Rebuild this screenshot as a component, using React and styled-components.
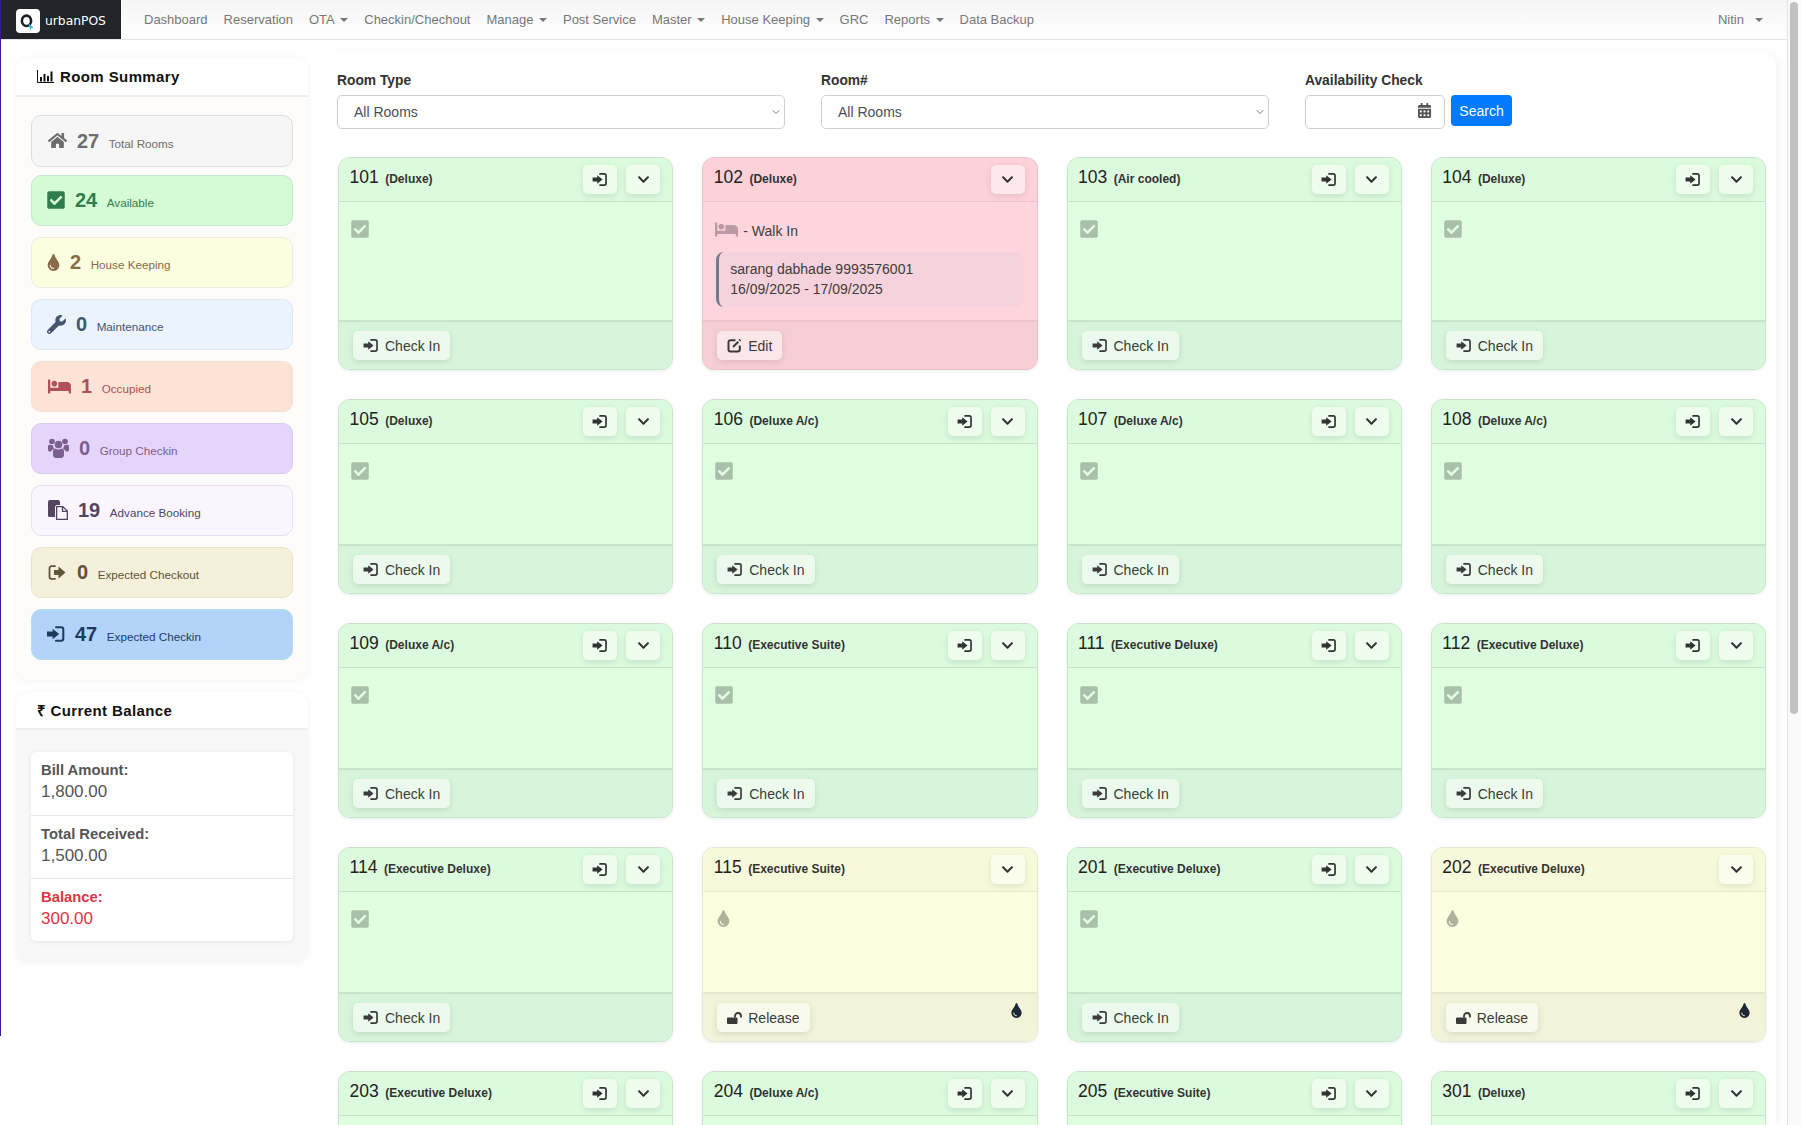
import React from 'react';
import styled, { createGlobalStyle } from 'styled-components';
import {
  FaHome,
  FaCheckSquare,
  FaTint,
  FaWrench,
  FaBed,
  FaChevronDown,
  FaCalendarAlt,
} from 'react-icons/fa';
import { FiChevronDown } from 'react-icons/fi';

const GlobalStyle = createGlobalStyle`
  html, body {
    margin: 0;
    height: 100%;
    overflow: hidden;
    background: #fff;
  }
  * { box-sizing: border-box; }
  body {
    font-family: "Liberation Sans", Arial, sans-serif;
    font-size: 14px;
    color: #333;
  }
`;

const links = [
  { label: 'Dashboard' },
  { label: 'Reservation' },
  { label: 'OTA', menu: true },
  { label: 'Checkin/Chechout' },
  { label: 'Manage', menu: true },
  { label: 'Post Service' },
  { label: 'Master', menu: true },
  { label: 'House Keeping', menu: true },
  { label: 'GRC' },
  { label: 'Reports', menu: true },
  { label: 'Data Backup' },
];

const stats = [
  { key: 'total', w: 18, icon: <FaHome size={19} />, count: 27, label: 'Total Rooms', bg: '#f6f6f6', line: '#dddddd', fg: '#6d6d6d' },
  { key: 'available', w: 16, icon: <FaCheckSquare size={20} />, count: 24, label: 'Available', bg: '#d5fbd5', line: '#c3e8cf', fg: '#2f7d4f' },
  { key: 'hk', w: 11, icon: <FaTint size={17} />, count: 2, label: 'House Keeping', bg: '#fbffdf', line: '#ecedde', fg: '#8a6a4d' },
  { key: 'maint', w: 17, icon: <FaWrench size={19} />, count: 0, label: 'Maintenance', bg: '#ebf3fc', line: '#e1e6ef', fg: '#45566b' },
  { key: 'occupied', w: 22, icon: <FaBed size={23} />, count: 1, label: 'Occupied', bg: '#fde3d6', line: '#f6e0d5', fg: '#b0505a' },
  { key: 'group', w: 20, icon: <UsersIcon />, count: 0, label: 'Group Checkin', bg: '#e6d5fb', line: '#dacbf1', fg: '#7b5f8f' },
  { key: 'advance', w: 19, icon: <FilesIcon />, count: 19, label: 'Advance Booking', bg: '#faf5ff', line: '#e6e0f1', fg: '#55465f' },
  { key: 'out', w: 18, icon: <SignOutIcon />, count: 0, label: 'Expected Checkout', bg: '#f5f0d9', line: '#e9e3c9', fg: '#5d5538' },
  { key: 'in', w: 16, icon: <SignInIcon width={18} height={16} />, count: 47, label: 'Expected Checkin', bg: '#b2d4fb', line: '#b7dde0', fg: '#1f3a5c' },
];

const rooms = [
  ['101', 'Deluxe'],
  ['102', 'Deluxe', 'occupied'],
  ['103', 'Air cooled'],
  ['104', 'Deluxe'],
  ['105', 'Deluxe'],
  ['106', 'Deluxe A/c'],
  ['107', 'Deluxe A/c'],
  ['108', 'Deluxe A/c'],
  ['109', 'Deluxe A/c'],
  ['110', 'Executive Suite'],
  ['111', 'Executive Deluxe'],
  ['112', 'Executive Deluxe'],
  ['114', 'Executive Deluxe'],
  ['115', 'Executive Suite', 'cleaning'],
  ['201', 'Executive Deluxe'],
  ['202', 'Executive Deluxe', 'cleaning'],
  ['203', 'Executive Deluxe'],
  ['204', 'Deluxe A/c'],
  ['205', 'Executive Suite'],
  ['301', 'Deluxe'],
];

const tones = {
  free: { head: '#dcfadd', body: '#e0fee0', foot: '#d7f5da', line: '#c6e6ca', hint: '#a9bfa9' },
  occupied: { head: '#fdd1d8', body: '#ffd5dd', foot: '#f6ced4', line: '#edc2ca', hint: '#bb9aa5' },
  cleaning: { head: '#f6fadb', body: '#fbffdf', foot: '#f1f4d8', line: '#e6e9d0', hint: '#adb39d' },
};

function SignInIcon({ width = 16, height = 13 }) {
  return (
    <svg width={width} height={height} viewBox="0 0 16 14">
      <path d="M0 4.800h5V2.400l5.800 4.600L5 11.600V9.200H0z" fill="currentColor" />
      <path d="M8 1h4.500a2 2 0 0 1 2 2v8a2 2 0 0 1-2 2H8" fill="none" stroke="currentColor" strokeWidth="1.800" strokeLinecap="round" />
    </svg>
  );
}

function SignOutIcon() {
  return (
    <svg width="18" height="15" viewBox="0 0 18 15">
      <path d="M7 1.200H3.500a2 2 0 0 0-2 2v8.600a2 2 0 0 0 2 2H7" fill="none" stroke="currentColor" strokeWidth="1.800" strokeLinecap="round" />
      <path d="M6 5h4.500V1.500l7 6-7 6V10H6z" fill="currentColor" />
    </svg>
  );
}

function UsersIcon() {
  return (
    <svg width="21" height="20" viewBox="0 0 21 20" fill="currentColor">
      <circle cx="4" cy="3.500" r="2.800" />
      <circle cx="17" cy="3.500" r="2.800" />
      <circle cx="10.500" cy="6.500" r="3.800" />
      <path d="M5 13.500c0-2 1.500-3 2.500-3 .8.600 1.800 1 3 1s2.200-.4 3-1c1 0 2.500 1 2.500 3V17c0 1.500-1 3-3 3H8c-2 0-3-1.500-3-3z" />
      <path d="M0 8.500c0-1 .8-2 1.800-2 .6.500 1.400.8 2.200.8.500 0 .8 0 1.200-.2-.2.600-.2 1-.1 1.500.2 1 .6 1.700 1 2.300-1.500.3-2.600 1.300-3 2.600H1.500C.5 13.500 0 12.500 0 11.500z" />
      <path d="M21 8.500c0-1-.8-2-1.800-2-.6.500-1.400.8-2.200.8-.5 0-.8 0-1.200-.2.200.600.200 1 .1 1.500-.2 1-.6 1.700-1 2.300 1.500.3 2.600 1.300 3 2.600h1.600c1 0 1.500-1 1.500-2z" />
    </svg>
  );
}

function FilesIcon() {
  return (
    <svg width="20" height="20" viewBox="0 0 20 20">
      <path d="M2 0h8.500l1.500 1.500V5H8.500L7 6.500V17H1.500A1.500 1.500 0 0 1 0 15.500V2a2 2 0 0 1 2-2z" fill="currentColor" />
      <path d="M8.600 6.600h6.200l4.500 4.500v8.200H8.600z" fill="none" stroke="currentColor" strokeWidth="1.300" />
      <path d="M14.500 6.800v4.500h4.600" fill="none" stroke="currentColor" strokeWidth="1.300" />
    </svg>
  );
}

function ChartIcon() {
  return (
    <svg width="17" height="13" viewBox="0 0 17 13">
      <path d="M0.500 0v12.500H17" fill="none" stroke="currentColor" strokeWidth="1" />
      <path d="M3 7h2v4.500H3zM6.500 4h2v7.500h-2zM10 6h2v5.500h-2zM13.500 1.500h2v10h-2z" fill="currentColor" />
    </svg>
  );
}

function EditIcon() {
  return (
    <svg width="15" height="15" viewBox="0 0 15 15">
      <path d="M8.500 2.200H3.500a2 2 0 0 0-2 2v7.300a2 2 0 0 0 2 2h7.300a2 2 0 0 0 2-2V7.500" fill="none" stroke="currentColor" strokeWidth="2" />
      <path d="M6 9l5.300-5.300" fill="none" stroke="currentColor" strokeWidth="2" />
      <path d="M12.500.8l1.700 1.700-1 1-1.700-1.700z" fill="currentColor" />
    </svg>
  );
}

function OpenLockIcon() {
  return (
    <svg width="15" height="12" viewBox="0 0 15 12">
      <path d="M1 5.500h8.500a1 1 0 0 1 1 1V11a1 1 0 0 1-1 1H1a1 1 0 0 1-1-1V6.500a1 1 0 0 1 1-1z" fill="currentColor" />
      <path d="M8 5.500V4a3 3 0 0 1 6 0v1.500" fill="none" stroke="currentColor" strokeWidth="1.800" />
    </svg>
  );
}

function LogoMark() {
  return (
    <svg width="24" height="24" viewBox="0 0 24 24">
      <rect width="24" height="24" rx="4" fill="#fff" />
      <ellipse cx="10.500" cy="11.800" rx="4.600" ry="5.200" fill="none" stroke="#1d2024" strokeWidth="2.600" />
      <path d="M12.300 14l5.200 4.800-2.300.3-1 2z" fill="#27b4ea" />
    </svg>
  );
}

function RoomCard({ number, type, state }) {
  const tone = tones[state || 'free'];
  return (
    <Card $tone={tone}>
      <CardHead $tone={tone}>
        <RoomNo>{number}</RoomNo>
        <RoomType>({type})</RoomType>
        <HeadActions>
          {!state && (
            <IconButton aria-label="Check in">
              <SignInIcon />
            </IconButton>
          )}
          <IconButton aria-label="More">
            <FaChevronDown size={13} />
          </IconButton>
        </HeadActions>
      </CardHead>
      <CardBody>
        {state === 'occupied' && (
          <>
            <WalkIn>
              <Hint $tone={tone}>
                <FaBed size={23} />
              </Hint>
              <span>- Walk In</span>
            </WalkIn>
            <GuestNote>
              sarang dabhade 9993576001
              <br />
              16/09/2025 - 17/09/2025
            </GuestNote>
          </>
        )}
        {state === 'cleaning' && (
          <Hint $tone={tone}>
            <FaTint size={17} />
          </Hint>
        )}
        {!state && (
          <CheckHint $tone={tone}>
            <FaCheckSquare size={20} />
          </CheckHint>
        )}
      </CardBody>
      <CardFoot $tone={tone}>
        {state === 'occupied' && (
          <FootButton>
            <EditIcon />
            Edit
          </FootButton>
        )}
        {state === 'cleaning' && (
          <>
            <FootButton>
              <OpenLockIcon />
              Release
            </FootButton>
            <FootMark>
              <FaTint size={15} />
            </FootMark>
          </>
        )}
        {!state && (
          <FootButton>
            <SignInIcon />
            Check In
          </FootButton>
        )}
      </CardFoot>
    </Card>
  );
}

export default function App() {
  return (
    <Screen>
      <GlobalStyle />
      <Page>
        <Navbar>
          <Brand>
            <LogoMark />
            <BrandName>urbanPOS</BrandName>
          </Brand>
          <NavList>
            {links.map(x => (
              <NavLink key={x.label}>
                {x.label}
                {x.menu && <Caret />}
              </NavLink>
            ))}
          </NavList>
          <UserMenu>
            Nitin
            <UserCaret />
          </UserMenu>
        </Navbar>

        <Content>
          <Sidebar>
            <Panel $bg="#fdfcfb">
              <PanelTitle>
                <ChartIcon />
                Room Summary
              </PanelTitle>
              <StatList>
                {stats.map(x => (
                  <Stat key={x.key} $bg={x.bg} $line={x.line} $fg={x.fg}>
                    <StatIcon $w={x.w}>{x.icon}</StatIcon>
                    <StatCount>{x.count}</StatCount>
                    <StatLabel>{x.label}</StatLabel>
                  </Stat>
                ))}
              </StatList>
            </Panel>

            <Panel $bg="#f8f8f8">
              <PanelTitle $tight>
                <span>₹</span>
                Current Balance
              </PanelTitle>
              <BalanceList>
                <BalanceRow>
                  <b>Bill Amount:</b>
                  <span>1,800.00</span>
                </BalanceRow>
                <BalanceRow>
                  <b>Total Received:</b>
                  <span>1,500.00</span>
                </BalanceRow>
                <BalanceRow $alert>
                  <b>Balance:</b>
                  <span>300.00</span>
                </BalanceRow>
              </BalanceList>
            </Panel>
          </Sidebar>

          <Main>
            <Filters>
              <Field>
                <FieldLabel>Room Type</FieldLabel>
                <SelectWrap>
                  <Select defaultValue="all">
                    <option value="all">All Rooms</option>
                  </Select>
                  <SelectArrow>
                    <FiChevronDown size={12} />
                  </SelectArrow>
                </SelectWrap>
              </Field>
              <Field>
                <FieldLabel>Room#</FieldLabel>
                <SelectWrap>
                  <Select defaultValue="all">
                    <option value="all">All Rooms</option>
                  </Select>
                  <SelectArrow>
                    <FiChevronDown size={12} />
                  </SelectArrow>
                </SelectWrap>
              </Field>
              <Field>
                <FieldLabel>Availability Check</FieldLabel>
                <DateRow>
                  <DateBox>
                    <DateInput type="text" />
                    <DateIcon>
                      <FaCalendarAlt size={15} />
                    </DateIcon>
                  </DateBox>
                  <SearchButton>Search</SearchButton>
                </DateRow>
              </Field>
            </Filters>

            <RoomGrid>
              {rooms.map(([number, type, state]) => (
                <RoomCard key={number} number={number} type={type} state={state} />
              ))}
            </RoomGrid>
          </Main>
        </Content>
      </Page>
      <Scrollbar>
        <ScrollThumb />
      </Scrollbar>
    </Screen>
  );
}

const Screen = styled.div`
  position: relative;
  display: flex;
  height: 100vh;
  overflow: hidden;

  &::before {
    content: '';
    position: absolute;
    left: 0;
    top: 0;
    z-index: 5;
    width: 1px;
    height: 1036px;
    background: #3a1a8c;
  }
`;

const Page = styled.div`
  flex: 1;
  min-width: 0;
  display: flex;
  flex-direction: column;
`;

const Navbar = styled.nav`
  flex: none;
  display: flex;
  align-items: stretch;
  height: 40px;
  padding-left: 1px;
  border-bottom: 1px solid #e4e4e4;
  background: linear-gradient(#f5f5f5, #fff);
`;

const Brand = styled.div`
  display: flex;
  align-items: center;
  gap: 5px;
  width: 120px;
  padding: 2px 0 0 15px;
  background: #212529;
`;

const BrandName = styled.span`
  font-family: "DejaVu Sans", sans-serif;
  font-size: 12.3px;
  color: #fff;
`;

const NavList = styled.div`
  display: flex;
  align-items: center;
  margin-left: 23px;
  font-size: 13px;
  color: #777;
`;

const NavLink = styled.a`
  display: flex;
  align-items: center;
  padding: 0 8px;
  margin-top: -1px;
  white-space: nowrap;

  &:first-child {
    padding-left: 0;
  }
`;

const Caret = styled.i`
  width: 0;
  height: 0;
  margin: 1px 0 0 5.5px;
  border-top: 4px solid #777;
  border-left: 4px solid transparent;
  border-right: 4px solid transparent;
`;

const UserMenu = styled.div`
  display: flex;
  align-items: center;
  margin: -1px 24px 0 auto;
  font-size: 13px;
  color: #777;
`;

const UserCaret = styled(Caret)`
  margin-left: 11px;
`;

const Content = styled.div`
  flex: 1;
  min-height: 0;
  display: flex;
  gap: 10px;
  padding: 0 11px 0 16px;
  background: #fff;
`;

const Sidebar = styled.aside`
  flex: none;
  width: 292px;
  padding-top: 17px;
  display: flex;
  flex-direction: column;
  gap: 12px;
`;

const Panel = styled.section`
  overflow: hidden;
  border-radius: 12px;
  background: ${p => p.$bg};
  box-shadow: 0 1px 6px rgba(0, 0, 0, 0.05);
`;

const PanelTitle = styled.h2`
  display: flex;
  align-items: center;
  gap: ${p => (p.$tight ? '4px' : '6px')};
  height: ${p => (p.$tight ? '38px' : '40px')};
  margin: 0;
  padding-left: 21px;
  background: #fff;
  border-bottom: 2px solid #efefef;
  font-size: 15px;
  font-weight: 700;
  letter-spacing: 0.4px;
  color: #111;
`;

const StatList = styled.div`
  display: flex;
  flex-direction: column;
  gap: 10.5px;
  padding: 18px 15px 20px;
`;

const Stat = styled.div`
  display: flex;
  align-items: center;
  height: 51.5px;
  padding: 0 16px;
  border: 1px solid ${p => p.$line};
  border-radius: 10px;
  background: ${p => p.$bg};
  color: ${p => p.$fg};

  &:first-child {
    margin-bottom: -2.5px;
  }
`;

const StatIcon = styled.span`
  flex: none;
  display: flex;
  justify-content: center;
  width: ${p => p.$w}px;
  margin-right: 11px;

  svg {
    flex: none;
  }
`;

const StatCount = styled.strong`
  font-size: 20px;
  line-height: 1;
`;

const StatLabel = styled.span`
  align-self: center;
  margin: 5px 0 0 9.5px;
  font-size: 11.7px;
`;

const BalanceList = styled.div`
  margin: 22px 15px 21px;
  border-radius: 5px;
  background: #fff;
  box-shadow: 0 1px 5px rgba(0, 0, 0, 0.08);
`;

const BalanceRow = styled.div`
  display: flex;
  flex-direction: column;
  justify-content: center;
  gap: 3px;
  height: 63px;
  padding: 0 10px 4px;
  color: ${p => (p.$alert ? '#dc3545' : '#555')};
  border-top: 1px solid #e6e6ec;

  &:first-child {
    border-top: 0;
  }

  b {
    font-size: 14.8px;
    line-height: 18px;
  }

  span {
    font-size: 17px;
    line-height: 20px;
  }
`;

const Main = styled.main`
  flex: 1;
  min-width: 0;
  margin-top: 12px;
  padding: 21px 10px 0 19px;
  border-radius: 14px 14px 0 0;
  background: #fff;
  box-shadow: 4px 0 8px rgba(0, 0, 0, 0.03);
`;

const Filters = styled.div`
  display: flex;
  gap: 36.5px;
  margin-bottom: 28px;
`;

const Field = styled.div`
  width: 447.5px;

  &:last-child {
    width: 220px;
  }
`;

const FieldLabel = styled.label`
  display: block;
  margin-bottom: 6px;
  font-size: 13.8px;
  font-weight: 700;
  line-height: 16px;
  color: #333;
`;

const SelectWrap = styled.div`
  position: relative;
`;

const Select = styled.select`
  display: block;
  width: 100%;
  height: 34px;
  padding: 0 16px;
  appearance: none;
  border: 1px solid #cfcfcf;
  border-radius: 5px;
  background: #fff;
  font-family: inherit;
  font-size: 14px;
  color: #495057;
`;

const SelectArrow = styled.span`
  position: absolute;
  top: 11px;
  right: 3px;
  display: flex;
  color: #777;
  pointer-events: none;
`;

const DateRow = styled.div`
  display: flex;
  align-items: flex-start;
  gap: 6px;
`;

const DateBox = styled.div`
  position: relative;
  width: 140px;
`;

const DateInput = styled.input`
  display: block;
  width: 100%;
  height: 34px;
  border: 1px solid #cfcfcf;
  border-radius: 5px;
  background: #fff;
`;

const DateIcon = styled.span`
  position: absolute;
  top: 8px;
  right: 13px;
  display: flex;
  color: #555;
`;

const SearchButton = styled.button`
  width: 61px;
  height: 31px;
  padding: 0;
  border: 0;
  border-radius: 4px;
  background: #007bff;
  font-family: inherit;
  font-size: 14px;
  color: #fff;
`;

const RoomGrid = styled.div`
  display: grid;
  grid-template-columns: repeat(4, 1fr);
  gap: 29px;
  margin-left: 1px;
`;

const Card = styled.article`
  display: flex;
  flex-direction: column;
  overflow: hidden;
  border: 1px solid ${p => p.$tone.line};
  border-radius: 12px;
  background: ${p => p.$tone.body};
  box-shadow: 0 1px 3px rgba(0, 0, 0, 0.08);
`;

const CardHead = styled.header`
  flex: none;
  display: flex;
  align-items: center;
  height: 44px;
  padding: 0 12px 0 10.5px;
  border-bottom: 1px solid ${p => p.$tone.line};
  background: ${p => p.$tone.head};
`;

const RoomNo = styled.span`
  margin: -4px 6.5px 0 0;
  font-size: 17.5px;
  color: #222;
`;

const RoomType = styled.span`
  margin-top: -1px;
  font-size: 12px;
  font-weight: 700;
  color: #333;
`;

const HeadActions = styled.div`
  display: flex;
  gap: 9px;
  margin-left: auto;
`;

const IconButton = styled.button`
  display: flex;
  align-items: center;
  justify-content: center;
  width: 34px;
  height: 29px;
  padding: 0;
  border: 0;
  border-radius: 5px;
  background: rgba(255, 255, 255, 0.5);
  box-shadow: 0 2px 6px rgba(0, 0, 0, 0.1);
  color: #333;
`;

const CardBody = styled.div`
  flex: 1;
  min-height: 100px;
  padding: 18px 13px 13px;
`;

const Hint = styled.span`
  display: inline-flex;
  margin-left: -1px;
  color: ${p => p.$tone.hint};
`;

const CheckHint = styled(Hint)`
  margin: -1px 0 0 -2px;
`;

const WalkIn = styled.div`
  display: flex;
  align-items: center;
  gap: 5px;
  height: 32px;
  padding-bottom: 13px;
  font-size: 14px;
  color: #3d3d3d;

  span:last-child {
    padding-top: 3px;
  }
`;

const GuestNote = styled.div`
  height: 55px;
  padding: 7px 11px;
  border-left: 3px solid #6f7b8f;
  border-radius: 8px;
  background: #f5d2dc;
  font-size: 14px;
  line-height: 20px;
  color: #3d3d3d;
`;

const CardFoot = styled.footer`
  flex: none;
  display: flex;
  justify-content: space-between;
  height: 49px;
  padding: 9px 13px 0 14px;
  border-top: 2px solid ${p => p.$tone.line};
  background: ${p => p.$tone.foot};
`;

const FootButton = styled.button`
  display: flex;
  align-items: center;
  gap: 6px;
  height: 29px;
  padding: 0 10px;
  border: 0;
  border-radius: 5px;
  background: rgba(255, 255, 255, 0.5);
  box-shadow: 0 2px 6px rgba(0, 0, 0, 0.1);
  font-family: inherit;
  font-size: 14px;
  color: #3a3a3a;
`;

const FootMark = styled.span`
  display: flex;
  color: #1f2933;
`;

const Scrollbar = styled.div`
  flex: none;
  width: 14px;
  padding: 2px 0 0 2px;
  border-left: 1px solid #e4e4e4;
  background: #fafafa;
`;

const ScrollThumb = styled.div`
  width: 8px;
  height: 712px;
  border-radius: 4px;
  background: #c1c1c1;
`;
